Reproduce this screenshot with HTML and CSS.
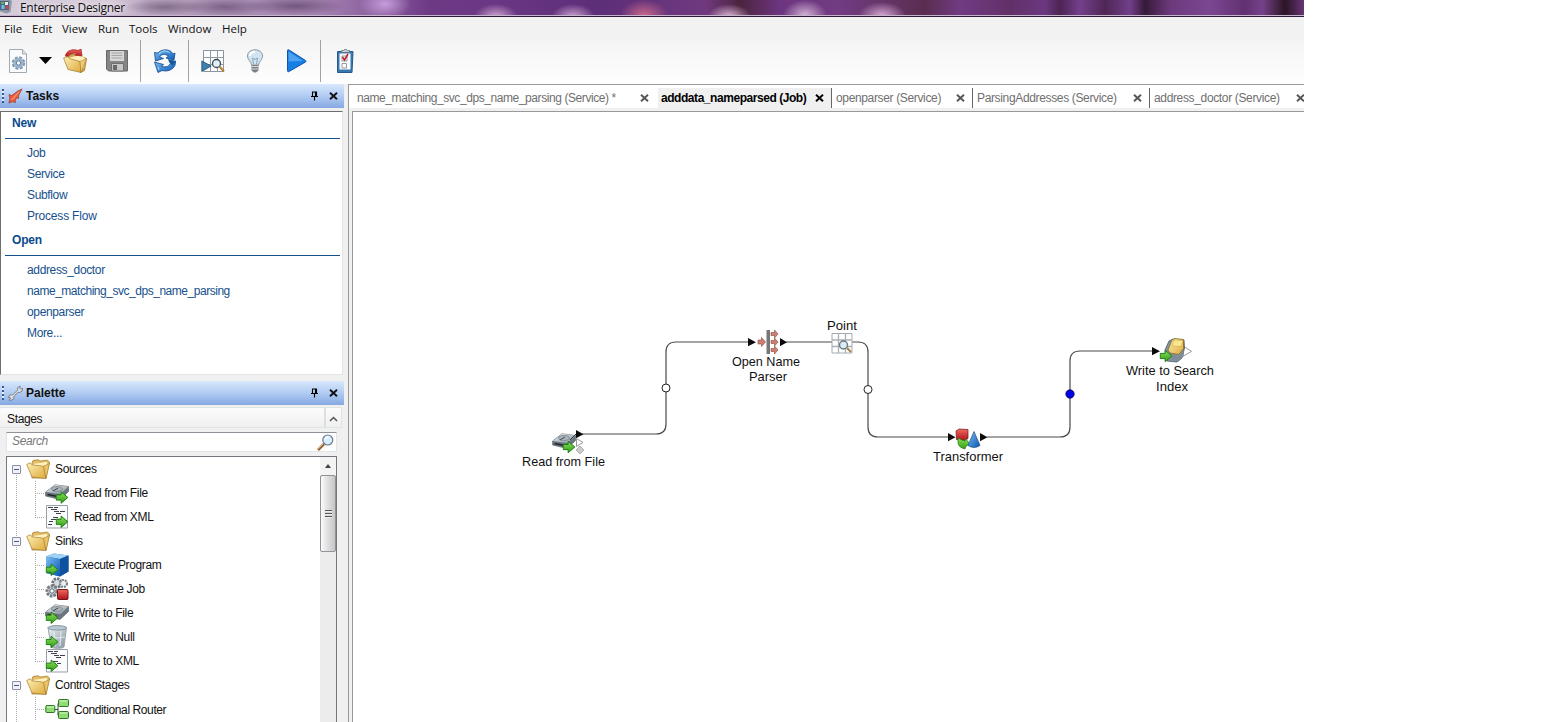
FILE: index.html
```html
<!DOCTYPE html>
<html lang="en">
<head>
<meta charset="utf-8">
<title>Enterprise Designer</title>
<link rel="stylesheet" href="styles.css">
</head>
<body>
<svg class="defs" width="0" height="0" aria-hidden="true">
  <defs>
    <linearGradient id="gold" x1="0" y1="0" x2="1" y2="1"><stop offset="0" stop-color="#fdf0b4"/><stop offset="1" stop-color="#dda93c"/></linearGradient>
    <linearGradient id="green" x1="0" y1="0" x2="0" y2="1"><stop offset="0" stop-color="#8be05a"/><stop offset="1" stop-color="#2f9e14"/></linearGradient>
    <linearGradient id="blue" x1="0" y1="0" x2="1" y2="1"><stop offset="0" stop-color="#7cc0f5"/><stop offset="1" stop-color="#0b55b4"/></linearGradient>
    <linearGradient id="steel" x1="0" y1="0" x2="1" y2="1"><stop offset="0" stop-color="#eef2f5"/><stop offset="1" stop-color="#84909a"/></linearGradient>
    <linearGradient id="red" x1="0" y1="0" x2="0" y2="1"><stop offset="0" stop-color="#f06a5c"/><stop offset="1" stop-color="#b0121b"/></linearGradient>
    <symbol id="i-arrow" viewBox="0 0 12 12"><path d="M.6 3.600h4.600V.7l6.200 5.300-6.200 5.300V8.400H.6z" fill="url(#green)" stroke="#1d7a10" stroke-width=".9"/></symbol>
    <symbol id="i-drive" viewBox="0 0 24 17"><path d="M.6 8 10 .8 23.500 2.500v5L15 15.500.6 12z" fill="#6c767e" stroke="#4c555c" stroke-width=".6"/><path d="M.8 8 10 .8l13.500 1.700L15.500 10z" fill="url(#steel)"/><ellipse cx="12" cy="5" rx="5.500" ry="2.500" fill="#aab3ba" stroke="#7b858d" stroke-width=".8"/><path d="m8 7 5-3" stroke="#40484e"/><path d="m2.500 10.500 9 1.800" stroke="#22272b" stroke-width="1.600"/></symbol>
    <symbol id="i-readfile" viewBox="0 0 24 24"><use href="#i-drive" y="3" width="24" height="17"/><use href="#i-arrow" x="10.500" y="9.500" width="13" height="14"/></symbol>
    <symbol id="i-writefile" viewBox="0 0 24 24"><use href="#i-drive" y="3" width="24" height="17"/><use href="#i-arrow" x=".5" y="10" width="13" height="13.500"/></symbol>
    <symbol id="i-xml" viewBox="0 0 24 24"><path d="M1.500.5h21v22.500h-21z" fill="#fafbfc" stroke="#98a0a8"/><path d="M3 2.500h5m1 0h4M6 4.500h6M9 6.500h5m1 0h5M11 8.500h5M8 12.500h5M6 14.500h5m1 0h4M4 16.500h4M3 19.500h4" stroke="#45404f" stroke-width="1.100"/></symbol>
    <symbol id="i-readxml" viewBox="0 0 24 24"><use href="#i-xml" width="24" height="24"/><use href="#i-arrow" x="10.500" y="10" width="13" height="13.500"/></symbol>
    <symbol id="i-writexml" viewBox="0 0 24 24"><use href="#i-xml" width="24" height="24"/><use href="#i-arrow" x=".5" y="10" width="13" height="13.500"/></symbol>
    <symbol id="i-execute" viewBox="0 0 24 24"><path d="M1 3.500 9 .6l14.500 1.900v16L15 23.500 1 20z" fill="#1e6cbd"/><path d="M1 3.500 9 .6l14.500 1.900L15 6z" fill="#9fd3f6"/><path d="M1 3.500 15 6v17.500L1 20z" fill="url(#blue)"/><path d="m15 6 8.500-3.500v16L15 23.500z" fill="#10529d"/><use href="#i-arrow" x=".5" y="10" width="13" height="13.500"/></symbol>
    <symbol id="i-terminate" viewBox="0 0 24 24"><circle cx="12" cy="6" r="4.300" fill="#d6dbdf" stroke="#6a7279" stroke-width="2.800" stroke-dasharray="2.300 1"/><circle cx="18.500" cy="6.500" r="3.500" fill="#eceff1" stroke="#7b848b" stroke-width="2.200" stroke-dasharray="2 .9"/><circle cx="7" cy="14" r="5" fill="#cfd5da" stroke="#747d85" stroke-width="3" stroke-dasharray="2.600 1"/><circle cx="7" cy="14" r="2.200" fill="#fff" stroke="#59636b"/><rect x="12.500" y="12.500" width="10.500" height="10" rx="1" fill="url(#red)" stroke="#70191c"/></symbol>
    <symbol id="i-null" viewBox="0 0 24 24"><path d="M3 2.500 6 22c2 1.800 11 1.800 13 0l2.500-19.500z" fill="url(#steel)" stroke="#9ba8b1"/><ellipse cx="12.200" cy="2.800" rx="9.300" ry="2.200" fill="#b7c9d5" stroke="#8798a4"/><path d="m9 6 1 15m6-15-1 15m-9-9c4 1 9 1 14 0" stroke="#dde9f0" stroke-width="1.200" fill="none"/><use href="#i-arrow" x=".5" y="10.500" width="13" height="13"/></symbol>
    <symbol id="i-router" viewBox="0 0 24 24"><path d="M9 12.500h4M13 6.500v12M13 6.500h3M13 18.500h3" stroke="#334b30" fill="none"/><g fill="#8fdb74" stroke="#2f7428"><rect x=".8" y="8.500" width="9" height="7" rx="1"/><rect x="13.500" y="2.500" width="10" height="7" rx="1"/><rect x="13.500" y="14.500" width="10" height="7" rx="1"/></g><path d="M2 10h7M15 4h7M15 16h7" stroke="#d5f7c6"/></symbol>
    <symbol id="i-folder" viewBox="0 0 24 20"><path d="m6 4 1-2.500L12 .7l2 1.300 7.500-.8L23.500 3l-3.500 16H6z" fill="#e3bc64" stroke="#9b7326" stroke-width=".7"/><path d="m6.500 5 14-2 1 2-3 13H9z" fill="#fff3c0"/><path d="M.7 5.500 4 3.800l2 2 11.500 1.400L20 19.500 6 18z" fill="url(#gold)" stroke="#a87f2c" stroke-width=".7"/><path d="m20 19.500 3.500-15-6 2.700z" fill="#eac26a" stroke="#a87f2c" stroke-width=".6"/></symbol>
    <symbol id="i-pin" viewBox="0 0 9 10"><path d="M2.500 5.500V1h4v4.500M5.500 1v4.500M1 5.500h7M4.500 5.500V9.500" fill="none" stroke="#000" stroke-width="1.100"/></symbol>
    <symbol id="i-x" viewBox="0 0 9 8"><path d="m1 .7 7 6.600m0-6.600L1 7.300" fill="none" stroke="currentColor" stroke-width="1.900"/></symbol>
    <symbol id="i-grid" viewBox="0 0 24 24"><path d="M2.500 1.500h20v21h-20z" fill="#fbfdfe" stroke="#8b949b"/><path d="M9.500 1v22M16.500 1v22M2 8.500h21M2 15.500h21" stroke="#929ba2"/></symbol>
  </defs>
</svg>

<div class="app">
  <header class="titlebar">
    <svg class="app-icon" viewBox="0 0 12 14"><path d="M0 0h10.500l1.500 1-1.500 11-4 1.500-6.500-2z" fill="#8e99a8"/><path d="M0 1h9v9H0z" fill="#526486"/><path d="M1.500 5h3v4h-3z" fill="#64c6df"/><path d="M5 2h3v3H5z" fill="#e9efe8"/><path d="M5.500 6h3v3h-3z" fill="#ca4842"/><path d="M1 2h3v2H1z" fill="#61b967"/></svg>
    <span class="title">Enterprise Designer</span>
  </header>
  <nav class="menubar">
    <span>File</span><span>Edit</span><span>View</span><span>Run</span><span>Tools</span><span>Window</span><span>Help</span>
  </nav>
  <div class="toolbar">
    <svg class="tool" viewBox="0 0 24 24"><path d="M3.500.5h13l4 4.500v18.500h-17z" fill="#f8fafc" stroke="#a0a9b0"/><path d="M16.500.5V5h4" fill="#dfe5e9" stroke="#a0a9b0"/><circle cx="12.500" cy="14" r="5.300" fill="#a9bdd0" stroke="#7f97ad" stroke-width="2.800" stroke-dasharray="2.700 1.460"/><circle cx="12.500" cy="14" r="5" fill="#9db5cb"/><circle cx="12.500" cy="14" r="2.200" fill="#f4f7fa" stroke="#63809c"/></svg>
    <svg class="caret" viewBox="0 0 16 8"><path d="M1 0h13L7.500 7z" fill="#000"/></svg>
    <svg class="tool gap-s" viewBox="0 0 24 24"><path d="m5 8 3-3 7 1 8.500 3.500-2 12-4 2z" fill="#d5a548" stroke="#95702b" stroke-width=".7"/><path d="m5 9 12-3 5 3-1 10z" fill="#fff0bb"/><path d="M2.500 7C3 1.500 10-.5 15 1.500L18 0l1 7-7-1 2-1.500C10 3.500 6 5 4.500 8z" fill="url(#red)" stroke="#a51920" stroke-width=".7"/><path d="m.6 9 3.900-1.500 2 2 10.500 3 1 11L5 20.500z" fill="url(#gold)" stroke="#9f792d" stroke-width=".7"/><path d="m18 23.500 5.500-14-6.500 3z" fill="#f0cb76" stroke="#a98130" stroke-width=".6"/></svg>
    <svg class="tool gap-m" viewBox="0 0 24 24"><path d="M1.500 1.500h21v20.500h-19l-2-2z" fill="#858585" stroke="#696969"/><path d="M5 2h14v10H5z" fill="#d8d8d8"/><path d="M6.500 4h11M6.500 6.500h11M6.500 9h11" stroke="#a4a4a4"/><path d="M6.500 14.500h12V22h-12z" fill="#c7c7c7" stroke="#707070"/><path d="M8 16h4v5H8z" fill="#686868"/></svg>
    <i class="sep"></i>
    <svg class="tool" viewBox="0 0 24 24"><path d="M1.500 3.500 5 4C8 .5 14-.2 18 2.500l2 2.500 2-1-1 7-8-2 2.500-2C12 4.500 8 5 6.500 8l4 1.500-8 2.500z" fill="url(#blue)" stroke="#0b4a8c" stroke-width=".8"/><path d="M22.500 12c1 7-6.500 11.500-13.500 9.500l-4 2L1.500 13l9 2.500-2 1.500c4.500 2 8 .5 9.500-4z" fill="url(#blue)" stroke="#0b4a8c" stroke-width=".8"/><path d="m15 10 7.500 2-2.500 5-4-4z" fill="#13589f"/><path d="M6 5c3-3.500 7-4 10.500-1.500M5 18l1 3" stroke="#b1e1fa" fill="none"/></svg>
    <i class="sep"></i>
    <svg class="tool" viewBox="0 0 24 24"><use href="#i-grid" width="24" height="24"/><path d="m.8 12 9.400 5L.8 22.500z" fill="#3f80ad" stroke="#214e72" stroke-width=".8"/><circle cx="15.500" cy="14.500" r="4" fill="#e0f0fb" stroke="#404a52" stroke-width="1.300"/><path d="m18.500 17.500 4.500 5" stroke="#b9822e" stroke-width="2"/></svg>
    <svg class="tool gap-m" viewBox="0 0 24 24"><path d="M8.500 16C8 12 4.500 11 4.500 7 4.500 3 8 .8 12 .8S19.500 3 19.500 7c0 4-3.500 5-4 9z" fill="#d2e4f2" stroke="#8799a7"/><path d="M7 7c0-3 2-4 5-4" fill="none" stroke="#fff" stroke-width="2"/><path d="m10.500 15-1-6 2.500 1.500L14.500 9l-1 6" fill="none" stroke="#89a6ba"/><path d="M8.500 16h7v5.500L13 23.500h-2l-2.500-2z" fill="#7d7f80"/><path d="M8.500 17.500h7m-7 2.500h7" stroke="#d7d8d9"/></svg>
    <svg class="tool gap-m" viewBox="0 0 24 24"><path d="M2.500 1.500c0-1 .7-1 1.500-.5l16.500 10.500c.7.5.7 1 0 1.500l-16.500 9.500c-.8.500-1.500.2-1.500-.7z" fill="#167fe5" stroke="#1453a8"/><path d="M3.500 2.500 18 12 3.500 12.500z" fill="#74b9f8" opacity=".6"/></svg>
    <i class="sep"></i>
    <svg class="tool" viewBox="0 0 24 24"><path d="M4.500 2.500h15.500l-1 21H4.500z" fill="#3977ad" stroke="#245b8c"/><path d="M6.500 4.500h11V20.500h-11z" fill="#fbfbfc"/><path d="M8.500 3.500v-2h2L11.500.5h2l1 1h2v2z" fill="#bfcad3" stroke="#5d6e7b" stroke-width=".8"/><path d="M9 7h5v5H9zM9 14.500h4.500V19H9z" fill="#fff" stroke="#929aa3"/><path d="m9.500 8 2 3 3.500-6" stroke="#bd1d24" stroke-width="1.500" fill="none"/></svg>
  </div>

  <div class="workspace">
    <aside class="sidebar">
      <div class="panel-head">
        <i class="grip"></i>
        <svg class="panel-icon" viewBox="0 0 16 16"><path d="M15 .5 10 3 4 7.500 1 6.500l1 4-1 5 4-1.500 3 1-.5-3 2.500-2 1.500.5-.5-2.500z" fill="#ee5c3c" stroke="#9b3d2b" stroke-width=".8"/><path d="m12 3.500-8 8.500" stroke="#fbb79b" fill="none"/></svg>
        <b>Tasks</b>
        <svg class="pin"><use href="#i-pin"/></svg>
        <svg class="x"><use href="#i-x"/></svg>
      </div>
      <section class="tasks">
        <h2 class="first">New</h2>
        <ul><li>Job</li><li>Service</li><li>Subflow</li><li class="wide">Process Flow</li></ul>
        <h2>Open</h2>
        <ul><li>address_doctor</li><li class="long">name_matching_svc_dps_name_parsing</li><li>openparser</li><li>More...</li></ul>
      </section>
      <div class="panel-head">
        <i class="grip"></i>
        <svg class="panel-icon" viewBox="0 0 16 16"><path d="m10 5 .5-3L13 .7l-.5 2 1 1L15.500 3 15 6l-2.500 1.500-2-.3-4.500 5 .3 2L4 15.500l-3 .2L2.700 14l-.5-1.200-1.700.2 1-2.500L4 9.800l1 .3z" fill="#d9dde1" stroke="#6f757b" stroke-width=".9"/></svg>
        <b>Palette</b>
        <svg class="pin"><use href="#i-pin"/></svg>
        <svg class="x"><use href="#i-x"/></svg>
      </div>
      <section class="palette">
        <div class="stages"><span>Stages</span><svg class="chevron" viewBox="0 0 17 20"><path d="m4.500 13.500 4-4 4 4" fill="none" stroke="#555" stroke-width="1.700"/></svg></div>
        <div class="search"><em>Search</em><svg class="lens" viewBox="0 0 17 17"><path d="m1 16 6-6" stroke="#956033" stroke-width="2.600"/><path d="m1 15 5-5" stroke="#dfb27c"/><circle cx="10.800" cy="6" r="5" fill="#d7edfb" stroke="#6b7d91" stroke-width="1.200"/><path d="M8 5.500c.5-2 2-2.500 3.500-2.500" fill="none" stroke="#fff" stroke-width="1.500"/></svg></div>
        <div class="tree">
          <div class="tree-list">
            <div class="group"><i class="box"></i><svg class="folder"><use href="#i-folder"/></svg><span>Sources</span></div>
            <div class="leaf"><svg><use href="#i-readfile"/></svg><span>Read from File</span></div>
            <div class="leaf last"><svg><use href="#i-readxml"/></svg><span>Read from XML</span></div>
            <div class="group"><i class="box"></i><svg class="folder"><use href="#i-folder"/></svg><span>Sinks</span></div>
            <div class="leaf"><svg><use href="#i-execute"/></svg><span>Execute Program</span></div>
            <div class="leaf"><svg><use href="#i-terminate"/></svg><span>Terminate Job</span></div>
            <div class="leaf"><svg><use href="#i-writefile"/></svg><span>Write to File</span></div>
            <div class="leaf"><svg><use href="#i-null"/></svg><span>Write to Null</span></div>
            <div class="leaf last"><svg><use href="#i-writexml"/></svg><span>Write to XML</span></div>
            <div class="group"><i class="box"></i><svg class="folder"><use href="#i-folder"/></svg><span>Control Stages</span></div>
            <div class="leaf router"><svg><use href="#i-router"/></svg><span>Conditional Router</span></div>
          </div>
          <div class="scroll"><i class="up"></i><div class="thumb"><i></i></div></div>
        </div>
      </section>
    </aside>

    <main class="editor">
      <div class="tabs">
        <div class="tab t1"><span>name_matching_svc_dps_name_parsing (Service) *</span><svg class="x"><use href="#i-x"/></svg></div>
        <div class="tab active"><span>adddata_nameparsed (Job)</span><svg class="x"><use href="#i-x"/></svg></div>
        <div class="tab t3"><span>openparser (Service)</span><svg class="x"><use href="#i-x"/></svg></div>
        <div class="tab t4"><span>ParsingAddresses (Service)</span><svg class="x"><use href="#i-x"/></svg></div>
        <div class="tab t5"><span>address_doctor (Service)</span><svg class="x"><use href="#i-x"/></svg></div>
      </div>
      <div class="canvas">
        <svg class="flow" width="951" height="610" viewBox="353 112 951 610">
          <g fill="none" stroke="#4a4a4a" stroke-width="1.200">
            <path d="M582 434h74q10 0 10-10v-72q0-10 10-10h73"/>
            <path d="M786 342h72q10 0 10 10v75q0 10 10 10h71"/>
            <path d="M987 437h73q10 0 10-10v-66q0-10 10-10h73"/>
          </g>
          <g fill="#0b0b0b">
            <path d="m576 430 7.500 4.200-7.500 4zM748 338l8 4.200-8 4zM780 338l7 4.200-7 4zM948 433l7.500 4.200-7.500 4zM980 433l7.500 4.200-7.500 4zM1152 347l8 4.200-8 4z"/>
          </g>
          <circle cx="666" cy="388" r="4" fill="#fff" stroke="#222"/>
          <circle cx="868" cy="389.500" r="4" fill="#fff" stroke="#222"/>
          <circle cx="1070" cy="394" r="4.200" fill="#0000e8" stroke="#10104a" stroke-width=".8"/>
          <use href="#i-drive" x="551.500" y="433" width="25" height="17"/>
          <path d="m570 440 6-6" stroke="#333"/>
          <use href="#i-arrow" x="562.500" y="440" width="13" height="14"/>
          <path d="m576.500 438.500 6.500 4-6.500 4z" fill="#fff" stroke="#999"/>
          <path d="m580 446 4 4-4 4-4-4z" fill="#ccc" stroke="#999" stroke-width=".7"/>
          <g>
            <path d="M766.500 330h3.500v24h-3.500z" fill="#777"/>
            <path d="M758 340h3.500v-2.500l4 4.500-4 4.500V344H758zM771 332.500h3.500V330l3.500 4-3.500 4v-2.500H771zM771 340.500h3.500V338l3.500 4-3.500 4v-2.500H771zM771 348.500h3.500V346l3.500 4-3.500 4v-2.500H771z" fill="#cc8175" stroke="#8f463e" stroke-width=".6"/>
          </g>
          <path d="M832 333.500h20v19.500h-20z" fill="#fff" stroke="#a2acb2"/>
          <path d="M838.500 333v20M845.500 333v20M832 340h20M832 346.500h20" stroke="#a8b0b5" stroke-width="1.300"/>
          <circle cx="843.500" cy="345" r="4" fill="#dcebf6" stroke="#6b7681" stroke-width="1.400"/><path d="m847 348 4 4" stroke="#a9834d" stroke-width="2.200"/>
          <path d="m956 431 3-2 9 .5v9l-3 2-8.500-1z" fill="url(#red)" stroke="#67161a" stroke-width=".7"/>
          <path d="M958 438v5q1 4 4 5l3 1 .5-2 4-3.500-4-5-.5 2.500-3-1z" fill="url(#green)" stroke="#1d7a10" stroke-width=".7"/>
          <path d="m974 431.500 6 14q-6 4-12 0z" fill="url(#blue)" stroke="#1a4f7e" stroke-width=".7"/>
          <path d="m1183 346 8.500 5.300-8.500 5z" fill="#fff" stroke="#999"/>
          <path d="m1165 350 4-9 4-2 11 1 .5 8-2.500 10-5 4-10-1z" fill="#8494a1" stroke="#4b5761" stroke-width=".8"/>
          <path d="m1168 350 4-10 3-1.500 8.500 1v9l-4.500 6-9-1.500z" fill="url(#gold)" stroke="#846b26" stroke-width=".8"/><path d="m1174 340 9 .5-2 6-9-.5z" fill="#fae68c" stroke="#c7a13c" stroke-width=".5"/>
          <path d="m1171 354 7 2 6-5-1 6-6 4-7-2z" fill="#7e8d99"/>
          <use href="#i-arrow" x="1159.500" y="349.500" width="13" height="13"/>
          <g class="labels">
            <text x="522" y="466" textLength="83" lengthAdjust="spacingAndGlyphs">Read from File</text>
            <text x="732" y="366" textLength="68" lengthAdjust="spacingAndGlyphs">Open Name</text>
            <text x="749" y="381" textLength="38" lengthAdjust="spacingAndGlyphs">Parser</text>
            <text x="827" y="330" textLength="30" lengthAdjust="spacingAndGlyphs">Point</text>
            <text x="933" y="461" textLength="70" lengthAdjust="spacingAndGlyphs">Transformer</text>
            <text x="1126" y="375" textLength="88" lengthAdjust="spacingAndGlyphs">Write to Search</text>
            <text x="1156" y="391" textLength="32" lengthAdjust="spacingAndGlyphs">Index</text>
          </g>
        </svg>
      </div>
    </main>
  </div>
</div>
</body>
</html>
```

FILE: styles.css
```css
* { box-sizing: border-box; }
body { margin: 0; background: #fff; font: 12px/14px "Liberation Sans", Arial, sans-serif; letter-spacing: -.35px; color: #111; overflow: hidden; }
ul, h2 { margin: 0; padding: 0; }
li { list-style: none; }
svg { display: block; flex: none; }
.defs { position: absolute; }
.app { width: 1304px; height: 722px; display: flex; flex-direction: column; background: #f0f0f0; overflow: hidden; }

.titlebar {
  height: 17px; flex: none; display: flex; align-items: flex-start; border-bottom: 1px solid #2e1b38; box-shadow: inset 0 -1px #c4b4cc;
  background:
    radial-gradient(ellipse 40px 8px at 165px 7px, rgba(95, 75, 105, .6), transparent),
    radial-gradient(ellipse 45px 9px at 225px 7px, rgba(90, 65, 100, .6), transparent),
    radial-gradient(ellipse 50px 9px at 295px 6px, rgba(80, 55, 90, .6), transparent),
    radial-gradient(ellipse 26px 16px at 385px 4px, rgba(205, 165, 225, .9), transparent),
    linear-gradient(90deg, #d5cbd8 0, #d8ccda 110px, #b7a3be 150px, #aa8fb4 240px, #a482b1 320px, rgba(140, 90, 165, 0) 430px),
    radial-gradient(ellipse 22px 13px at 496px 17px, #d0a7d2, transparent),
    radial-gradient(ellipse 22px 13px at 573px 17px, #cda5d1, transparent),
    radial-gradient(ellipse 24px 15px at 644px 15px, #c76789, transparent),
    radial-gradient(ellipse 22px 13px at 729px 17px, #dfb9d8, transparent),
    radial-gradient(ellipse 22px 15px at 805px 15px, #d1b3d5, transparent),
    radial-gradient(ellipse 24px 14px at 882px 16px, #d6abd5, transparent),
    linear-gradient(90deg, #7a4690 0, #6c3885 480px, #5d2e79 600px, #70397f 705px, #4b243f 740px, #6d357f 780px, #723b82 840px, #5a2d50 925px, #713b82 960px, #623068 1010px, #6b3880 1045px, #4d2453 1060px, #74408b 1080px, #4f2756 1105px, #713f88 1130px, #351a38 1145px, #6c397c 1170px, #7c4792 1210px, #613070 1245px, #75428b 1262px, #2b1523 1285px, #683477 1304px);
}
.app-icon { width: 12px; height: 14px; }
.title { margin-left: 8px; font: 12px/16px "Open Sans", "Noto Sans", sans-serif; height: 16px; letter-spacing: -.3px; white-space: nowrap; text-shadow: 0 0 5px #fff; }

.menubar { height: 23px; flex: none; display: grid; grid-template-columns: 28px 30px 36px 31px 39px 54px 40px; padding-left: 4px; font: 11.5px/23px "Open Sans", "Noto Sans", sans-serif; letter-spacing: 0; background: #f2f2f3; }
.toolbar { height: 44px; flex: none; display: flex; align-items: center; padding: 0 0 2px 6px; background: linear-gradient(#f4f4f4, #fefefe); }
.tool { width: 24px; height: 24px; }
.caret { width: 16px; height: 8px; margin-left: 8px; }
.gap-s { margin-left: 9px; }
.gap-m { margin-left: 18px; }
.sep { width: 1px; height: 42px; background: #a2a2a2; margin: 0 12px 0 11px; }

.workspace { flex: 1; min-height: 0; display: flex; }
.sidebar { width: 344px; flex: none; display: flex; flex-direction: column; }
.panel-head { height: 24px; flex: none; display: flex; align-items: center; padding: 0 6px 0 2px; background: linear-gradient(#d8e8fd, #b1cbf2 50%, #86a9e3); }
.grip { width: 2px; height: 14px; background: repeating-linear-gradient(#36588f 0 2px, #e4effe 2px 4px); }
.panel-icon { width: 15px; height: 16px; margin: 0 3px 0 4px; }
.panel-head b { flex: 1; font-size: 12px; letter-spacing: 0; }
.pin { width: 9px; height: 10px; margin-right: 10px; }
.x { width: 9px; height: 8px; }
.tasks { height: 264px; margin: 3px 1px 6px 0; border: 1px solid #6d6d6d; border-right-color: #e3e3e3; border-bottom-color: #e3e3e3; background: #fff; color: #16508c; padding: 0 2px 0 4px; flex: none; }
.tasks h2 { height: 28px; padding: 5px 0 0 7px; font-size: 12px; line-height: 14px; letter-spacing: -.2px; border-bottom: 1px solid #16508c; color: #0b4a8c; }
.tasks h2.first { height: 27px; padding-top: 4px; }
.tasks ul { padding: 4px 0 0 22px; height: 89px; }
.tasks li { height: 21px; line-height: 21px; }
.tasks li.wide { letter-spacing: -.2px; }
.tasks li.long { letter-spacing: -.47px; }

.palette { flex: 1; min-height: 0; display: flex; flex-direction: column; padding: 2px 2px 0 0; }
.stages { height: 21px; flex: none; display: flex; justify-content: space-between; align-items: center; padding: 2px 0 0 7px; background: linear-gradient(#fcfcfc, #f0f0f0); border: 1px solid #dfe5e4; border-left: 0; }
.chevron { width: 17px; height: 20px; margin-top: -2px; border-left: 2px solid #dae2e0; }
.search { height: 20px; flex: none; margin: 4px 5px 0 6px; display: flex; justify-content: space-between; align-items: center; padding: 0 2px 0 5px; background: #fff; border: 1px solid #e2e4e6; border-top-color: #8e9298; }
.search em { color: #777; padding-bottom: 2px; }
.lens { width: 17px; height: 17px; }
.tree { flex: 1; min-height: 0; margin: 4px 5px 0 6px; display: flex; background: #fff; border: 1px solid #73777d; border-bottom: 0; overflow: hidden; }
.tree-list { flex: 1; overflow: hidden; background: repeating-linear-gradient(#aaa 0 1px, #fff 1px 2px) 9px 10px / 1px 100% no-repeat; }
.group, .leaf { height: 24px; display: flex; align-items: center; white-space: nowrap; }
.group { padding-left: 5px; }
.box { width: 9px; height: 9px; margin-right: 5px; border: 1px solid #8d8fa5; border-radius: 1px; background: linear-gradient(#405a9c, #405a9c) 1px 3px / 5px 1px no-repeat #f1f1f7; }
.folder { width: 24px; height: 20px; margin-right: 5px; }
.leaf { padding-left: 28px; }
.leaf::before { content: ""; width: 10px; height: 24px; background: repeating-linear-gradient(#aaa 0 1px, transparent 1px 2px) 0 0 / 1px 100% no-repeat, repeating-linear-gradient(90deg, #aaa 0 1px, transparent 1px 2px) 0 12px / 100% 1px no-repeat; }
.leaf.last::before { background-size: 1px 12px, 100% 1px; }
.leaf svg { width: 24px; height: 24px; margin-right: 5px; }
.leaf.router span { padding-top: 1px; letter-spacing: -.4px; }
.scroll { width: 16px; flex: none; background: #ececec; display: flex; flex-direction: column; align-items: stretch; }
.up { height: 18px; background: #f4f4f4; display: grid; place-items: center; }
.up::before { content: ""; border: 3px solid transparent; border-bottom: 4px solid #444; border-top: 0; }
.thumb { height: 77px; border: 1px solid #8f9296; border-radius: 2px; background: linear-gradient(90deg, #fafafa, #dedede 50%, #c6c6c8); display: grid; place-items: center; }
.thumb i { width: 7px; height: 8px; background: repeating-linear-gradient(#555 0 1px, #eee 1px 2px, #d8d8d8 2px 3px); }

.editor { flex: 1; min-width: 0; margin-left: 4px; border: 1px solid #999; border-right: 0; border-bottom: 0; display: flex; flex-direction: column; }
.tabs { height: 26px; flex: none; display: flex; align-items: stretch; background: #fff; border-bottom: 3px solid #f0f0f0; padding-top: 3px; overflow: hidden; color: #707070; }
.tab { flex: none; display: flex; align-items: center; justify-content: space-between; white-space: nowrap; }
.tab .x { color: #555; }
.t1 { width: 309px; padding: 0 9px 0 8px; letter-spacing: -.42px; }
.tab.active { width: 173px; padding: 0 7px 0 3px; background: #f0f0f0; color: #000; font-weight: bold; letter-spacing: -.45px; }
.tab.active .x { color: #000; }
.t3 { width: 141px; }
.t4 { width: 177px; }
.t5 { width: 156px; }
.t3, .t4, .t5 { padding: 0 7px 0 4px; border-left: 1px solid #666; }
.t5 { padding-right: 0; }
.canvas { flex: 1; min-height: 0; margin-left: 3px; border: 1px solid #999; border-right: 0; border-bottom: 0; background: #fff; overflow: hidden; }
.labels { font: 13.5px "Liberation Sans", Arial, sans-serif; letter-spacing: 0; fill: #111; }
```
